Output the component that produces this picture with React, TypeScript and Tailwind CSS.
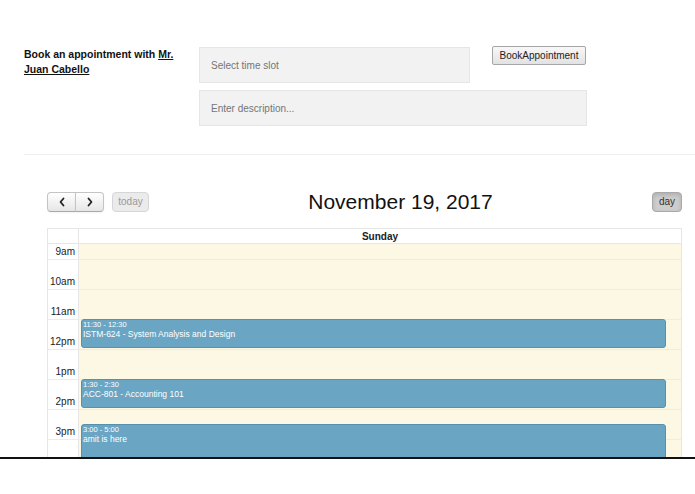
import React from "react";

const hours = ["9am", "10am", "11am", "12pm", "1pm", "2pm", "3pm", ""];

const events = [
    { id: "e1", time: "11:30 - 12:30", title: "ISTM-624 - System Analysis and Design", start: 2.5, end: 3.5 },
    { id: "e2", time: "1:30 - 2:30", title: "ACC-801 - Accounting 101", start: 4.5, end: 5.5 },
    { id: "e3", time: "3:00 - 5:00", title: "amit is here", start: 6, end: 8 },
];

const HOUR = 30;

function Chevron({ dir }: { dir: "left" | "right" }) {
    return (
        <svg width="8" height="10" viewBox="0 0 8 10" fill="none">
            <polyline
                points={dir === "left" ? "5.5,1.5 2.5,5 5.5,8.5" : "2.5,1.5 5.5,5 2.5,8.5"}
                stroke="#222"
                strokeWidth="1.8"
                strokeLinecap="round"
                strokeLinejoin="round"
            />
        </svg>
    );
}

const btn =
    "flex h-[20px] items-center justify-center border border-[#c4c4c4] border-b-[#a9a9a9] bg-gradient-to-b from-white to-[#e6e6e6] text-[10px] text-[#333] shadow-[0_1px_2px_rgba(0,0,0,0.05)]";

export default function App() {
    return (
        <div className="h-[494px] w-[695px] overflow-hidden bg-white font-['Liberation_Sans',Arial,sans-serif] text-[#333]">
            <div className="h-[459px] overflow-hidden border-b-2 border-[#111]">
                {/* booking form */}
                <div className="flex items-start pl-[24px] pt-[46px]">
                    <div className="w-[175px] pt-[1px] text-[10.5px] font-bold leading-[15px] text-[#111]">
                        <div>
                            Book an appointment with <span className="underline">Mr.</span>
                        </div>
                        <div className="underline">Juan Cabello</div>
                    </div>
                    <div className="flex flex-col">
                        <div className="flex items-start">
                            <div className="mt-[1px] flex h-[36px] w-[271px] items-center border border-[#e6e6e6] bg-[#f2f2f2] pl-[11px] text-[10px] text-[#757575]">
                                Select time slot
                            </div>
                            <button className="ml-[22px] h-[19px] w-[94px] rounded-[2px] border border-[#a6a6a6] bg-gradient-to-b from-[#f8f8f8] to-[#e2e2e2] text-[10px] text-[#222]">
                                BookAppointment
                            </button>
                        </div>
                        <div className="mt-[7px] flex h-[36px] w-[388px] items-center border border-[#e6e6e6] bg-[#f2f2f2] pl-[11px] text-[10px] text-[#757575]">
                            Enter description...
                        </div>
                    </div>
                </div>

                <div className="ml-[24px] mt-[28px] border-t border-[#eeeeee]" />

                {/* calendar */}
                <div className="pl-[47px] pr-[13px] pt-[36px]">
                    <div className="flex h-[21px] items-center">
                        <div className="flex items-center">
                            <button className={`${btn} w-[29px] rounded-l-[4px]`}>
                                <Chevron dir="left" />
                            </button>
                            <button className={`${btn} -ml-px w-[29px] rounded-r-[4px]`}>
                                <Chevron dir="right" />
                            </button>
                            <button className="ml-[8px] flex h-[20px] w-[37px] items-center justify-center rounded-[4px] border border-[#d6d6d6] bg-[#ebebeb] text-[10px] text-[#9a9a9a]">
                                today
                            </button>
                        </div>
                        <h2 className="flex-1 pt-[1px] text-center text-[21px] leading-[24px] text-[#111]">
                            November 19, 2017
                        </h2>
                        <button className="flex h-[20px] w-[30px] items-center justify-center rounded-[4px] border border-[#a9a9a9] bg-[#cdcdcd] text-[10px] text-[#333] shadow-[inset_0_2px_4px_rgba(0,0,0,0.15)]">
                            day
                        </button>
                    </div>

                    <div className="mt-[16px] border border-[#e6e6e6]">
                        <div className="flex h-[15px] border-b border-[#e6e6e6]">
                            <div className="w-[31px] border-r border-[#e6e6e6]" />
                            <div className="flex flex-1 items-center justify-center text-[10px] font-bold text-[#222]">
                                Sunday
                            </div>
                        </div>
                        <div className="relative">
                            {hours.map((h, i) => (
                                <div key={i}>
                                    <div className="flex h-[15px] border-t border-[#e8e5da] first:border-t-0">
                                        <div className="flex w-[31px] items-center justify-end border-r border-[#e6e6e6] bg-white pr-[3px] text-[10px] text-[#222]">
                                            {h}
                                        </div>
                                        <div className="flex-1 bg-[#fcf8e3]" />
                                    </div>
                                    <div className="flex h-[15px] border-t border-[#efece2]">
                                        <div className="w-[31px] border-r border-[#e6e6e6] bg-white" />
                                        <div className="flex-1 bg-[#fcf8e3]" />
                                    </div>
                                </div>
                            ))}
                            <div className="absolute inset-y-0 left-[33px] right-[15px]">
                                {events.map((ev) => (
                                    <div
                                        key={ev.id}
                                        className="absolute inset-x-0 overflow-hidden rounded-[3px] border border-[#5890ae] bg-[#6aa5c3] px-[1px] text-white"
                                        style={{ top: ev.start * HOUR, height: (ev.end - ev.start) * HOUR - 1 }}
                                    >
                                        <div className="text-[7.5px] leading-[10px]">{ev.time}</div>
                                        <div className="text-[8.5px] leading-[9px]">{ev.title}</div>
                                    </div>
                                ))}
                            </div>
                        </div>
                    </div>
                </div>
            </div>
        </div>
    );
}
